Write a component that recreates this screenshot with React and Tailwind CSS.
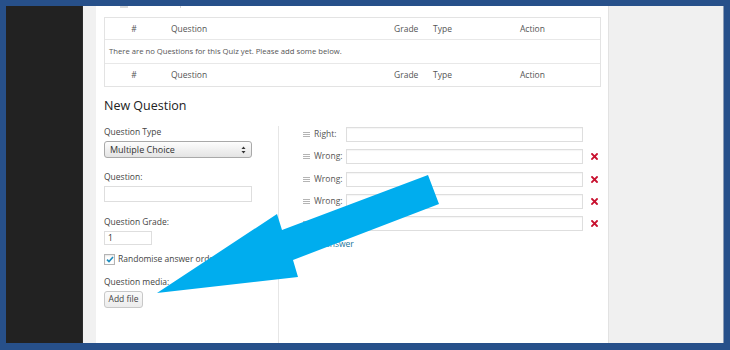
import React from "react";

const Handle = () => (
  <svg width="7" height="5" viewBox="0 0 7 5" className="shrink-0">
    <rect x="0" y="0" width="7" height="1" fill="#b4b4b4" />
    <rect x="0" y="2" width="7" height="1" fill="#b4b4b4" />
    <rect x="0" y="4" width="7" height="1" fill="#b4b4b4" />
  </svg>
);

const RedX = () => (
  <svg width="7" height="7" viewBox="0 0 7 7" className="shrink-0">
    <path d="M1 1 L6 6 M6 1 L1 6" stroke="#c8102e" strokeWidth="1.8" strokeLinecap="square" />
  </svg>
);

function AnswerRow({ label, removable }) {
  return (
    <div className="flex items-center h-[15px]">
      <div className="w-[11px] flex items-center">
        <Handle />
      </div>
      <div className="w-[32px] text-[8.5px] text-[#555]">{label}</div>
      <div className="w-[237px] h-[15px] border border-[#dedede] bg-white shadow-[inset_0_1px_1px_rgba(0,0,0,0.04)]" />
      <div className="w-[8px]" />
      {removable ? <RedX /> : null}
    </div>
  );
}

function HeaderRow({ border }) {
  return (
    <div className={`grid grid-cols-[58px_223px_39px_87px_1fr] h-[22px] items-center text-[8.5px] text-[#555] pt-[1px] ${border}`}>
      <div className="text-center">#</div>
      <div className="pl-[8px]">Question</div>
      <div className="pl-[8px]">Grade</div>
      <div className="pl-[8px]">Type</div>
      <div className="pl-[8px]">Action</div>
    </div>
  );
}

export default function App() {
  return (
    <div className="relative w-[730px] h-[350px] bg-[#27508a] pt-[6px] pl-[6px] pr-[6px] font-['Open_Sans',sans-serif] overflow-hidden">
      <div className="flex h-[337px]">
        <div className="w-[77px] bg-[#222222] border-r border-[#2c2c2c]" />
        <div className="w-[13px] bg-[#f1f1f1]" />
        <div className="w-[512px] bg-white flex flex-col px-[8px]">
          <div className="relative h-[11px]">
            <div className="absolute left-[16px] top-0 w-[8px] h-[2px] bg-[#dcdcdc]" />
            <div className="absolute left-[76px] top-0 w-[1px] h-[2px] bg-[#d5d5d5]" />
          </div>
          <div className="w-[497px] border border-[#e3e3e3]">
            <HeaderRow border="border-b border-[#e8e8e8]" />
            <div className="h-[24px] flex items-center pl-[4px] text-[7.7px] text-[#555] border-b border-[#e8e8e8]">
              There are no Questions for this Quiz yet. Please add some below.
            </div>
            <HeaderRow border="" />
          </div>
          <div className="mt-[11px] text-[12.5px] leading-[16px] text-[#222]">New Question</div>
          <div className="flex flex-1 mt-[12px]">
            <div className="w-[175px] border-r border-[#e6e6e6] flex flex-col">
              <div className="text-[8.5px] leading-[12px] text-[#444]">Question Type</div>
              <div className="mt-[3px] w-[148px] h-[17px] rounded-[3px] border border-[#a9a9a9] bg-gradient-to-b from-[#fdfdfd] to-[#e4e4e4] flex items-center justify-between pl-[5px] pr-[5px]">
                <span className="text-[9px] text-[#333] leading-none">Multiple Choice</span>
                <svg width="5" height="8" viewBox="0 0 5 8">
                  <path d="M2.5 0.5 L4.5 3 L0.5 3 Z" fill="#333" />
                  <path d="M2.5 7.5 L4.5 5 L0.5 5 Z" fill="#333" />
                </svg>
              </div>
              <div className="mt-[13px] text-[8.5px] leading-[12px] text-[#444]">Question:</div>
              <div className="mt-[3px] w-[148px] h-[16px] border border-[#dedede] bg-white" />
              <div className="mt-[14px] text-[8.5px] leading-[12px] text-[#444]">Question Grade:</div>
              <div className="mt-[3px] w-[48px] h-[14px] border border-[#dedede] bg-white flex items-center pl-[3px] text-[8.5px] text-[#333]">1</div>
              <div className="mt-[9px] flex items-center h-[11px]">
                <div className="w-[11px] h-[11px] border border-[#b4b4b4] bg-white flex items-center justify-center shadow-[inset_0_1px_2px_rgba(0,0,0,0.1)]">
                  <svg width="8" height="7" viewBox="0 0 8 7">
                    <path d="M1 3.6 L3 5.6 L7 1" stroke="#1e8cbe" strokeWidth="1.6" fill="none" />
                  </svg>
                </div>
                <span className="ml-[3px] text-[8.5px] text-[#444]">Randomise answer order</span>
              </div>
              <div className="mt-[11px] text-[8.5px] leading-[12px] text-[#444]">Question media:</div>
              <div className="mt-[3px] w-[39px] h-[17px] rounded-[3px] border border-[#c8c8c8] bg-gradient-to-b from-[#fafafa] to-[#ececec] flex items-center justify-center text-[8.5px] text-[#444]">
                Add file
              </div>
            </div>
            <div className="flex-1 flex flex-col pl-[24px] pt-[1px] gap-[7.3px]">
              <AnswerRow label="Right:" removable={false} />
              <AnswerRow label="Wrong:" removable />
              <AnswerRow label="Wrong:" removable />
              <AnswerRow label="Wrong:" removable />
              <AnswerRow label="Wrong:" removable />
              <div className="pl-[4px] text-[8.5px] leading-[12px] text-[#21759b]">Add answer</div>
            </div>
          </div>
        </div>
        <div className="flex-1 bg-[#f0f0f0] border-l border-[#e2e2e2] border-r border-r-[#8a9bb5]" />
      </div>
      <svg className="absolute left-0 top-0 pointer-events-none" width="730" height="350" viewBox="0 0 730 350">
        <polygon
          points="157,293 277,214 282,230 428,175 439,204 293,260 298,277"
          fill="#00adee"
        />
      </svg>
    </div>
  );
}
